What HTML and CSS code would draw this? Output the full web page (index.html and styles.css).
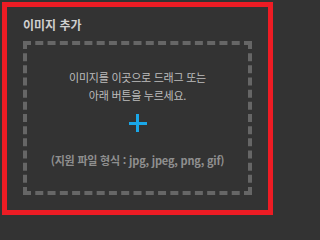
FILE: index.html
```html
<!DOCTYPE html>
<html lang="ko">
<head>
<meta charset="utf-8">
<link rel="stylesheet" href="styles.css">
</head>
<body>
<div class="panel">
  <div class="title">이미지 추가</div>
  <div class="drop">
    <div class="msg">이미지를 이곳으로 드래그 또는<br>아래 버튼을 누르세요.</div>
    <div class="plus" aria-label="추가"></div>
    <div class="formats">(지원 파일 형식 : jpg, jpeg, png, gif)</div>
  </div>
</div>
</body>
</html>
```
FILE: styles.css
```css
html, body {
  margin: 0;
  padding: 0;
  background: #333333;
}
body {
  font-family: "Noto Sans CJK KR", "Noto Sans", sans-serif;
}
.panel {
  margin: 2px 0 0 2px;
  width: 229px;
  height: 203px;
  border: 5px solid #ed1c24;
  padding: 0 16px;
  box-sizing: content-box;
  display: flex;
  flex-direction: column;
}
.title {
  margin-top: 10px;
  height: 16px;
  line-height: 16px;
  font-size: 12px;
  font-weight: bold;
  letter-spacing: 0;
  color: #cfcfcf;
}
.drop {
  margin-top: 8px;
  height: 146px;
  border: 4px dashed #666666;
  display: flex;
  flex-direction: column;
  align-items: center;
}
.msg {
  margin-top: 23px;
  font-size: 11px;
  line-height: 18px;
  letter-spacing: -0.25px;
  color: #bdbdbd;
  text-align: center;
}
.plus {
  position: relative;
  margin-top: 10px;
  width: 18px;
  height: 18px;
}
.plus::before, .plus::after {
  content: "";
  position: absolute;
  background: #1aa7e8;
}
.plus::before {
  left: 0;
  top: 7.5px;
  width: 18px;
  height: 3px;
}
.plus::after {
  top: 0;
  left: 7.5px;
  width: 3px;
  height: 18px;
}
.formats {
  margin-top: 19px;
  font-size: 11px;
  line-height: 18px;
  font-weight: bold;
  letter-spacing: -0.2px;
  color: #8f8f8f;
}
```
